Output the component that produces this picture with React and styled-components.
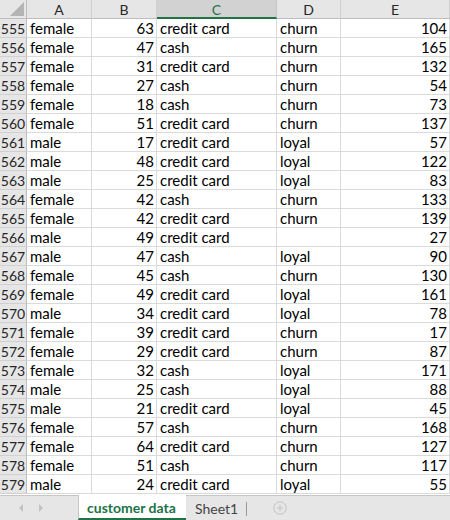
import React from 'react';
import styled, { createGlobalStyle, css } from 'styled-components';

const GlobalStyle = createGlobalStyle`
  html, body {
    margin: 0;
    padding: 0;
    background: #ffffff;
  }
  body {
    font-family: Lato, "Liberation Sans", Arial, sans-serif;
  }
`;

const GREEN = '#217346';
const COLS = '27px 65px 65px 120px 64px 109px';

const Sheet = styled.div`
  width: 450px;
  height: 520px;
  display: flex;
  flex-direction: column;
  overflow: hidden;
  background: #ffffff;
`;

const Grid = styled.div`
  flex: 1;
  display: grid;
  grid-template-columns: ${COLS};
  grid-template-rows: 19px;
  grid-auto-rows: 19px;
  align-content: start;
  overflow: hidden;
`;

const Corner = styled.div`
  position: relative;
  background: #e6e6e6;
  border-right: 1px solid #bdbdbd;
  border-bottom: 1px solid #bdbdbd;
  &::after {
    content: '';
    position: absolute;
    right: 2px;
    bottom: 2px;
    border-left: 14px solid transparent;
    border-bottom: 14px solid #b4b4b4;
  }
`;

const ColHead = styled.div`
  background: ${p => (p.$active ? '#d2d2d2' : '#e6e6e6')};
  color: ${p => (p.$active ? GREEN : '#262626')};
  border-right: 1px solid ${p => (p.$active ? '#c4c4c4' : '#d0d0d0')};
  border-bottom: ${p => (p.$active ? `2px solid ${GREEN}` : '1px solid #bdbdbd')};
  box-sizing: border-box;
  font-size: 14px;
  display: flex;
  align-items: center;
  justify-content: center;
  padding-top: 1px;
`;

const RowHead = styled.div`
  background: #e6e6e6;
  color: #262626;
  border-right: 1px solid #bdbdbd;
  border-bottom: 1px solid #d0d0d0;
  font-size: 14px;
  display: flex;
  align-items: center;
  justify-content: center;
  box-sizing: border-box;
`;

const Cell = styled.div`
  border-right: 1px solid #dadada;
  border-bottom: 1px solid #dadada;
  font-size: 15px;
  color: #000000;
  display: flex;
  align-items: center;
  padding: 0 2px 0 3px;
  box-sizing: border-box;
  white-space: nowrap;
  overflow: hidden;
  ${p =>
    p.$num &&
    css`
      justify-content: flex-end;
    `}
`;

const TabBar = styled.div`
  height: 25px;
  flex-shrink: 0;
  background: #e6e6e6;
  border-top: 1px solid #c6c6c6;
  display: flex;
  align-items: stretch;
  box-sizing: border-box;
`;

const NavArrows = styled.div`
  width: 78px;
  display: flex;
  align-items: center;
  padding-left: 19px;
  gap: 16px;
  box-sizing: border-box;
`;

const Arrow = styled.span`
  width: 0;
  height: 0;
  border-top: 4px solid transparent;
  border-bottom: 4px solid transparent;
  ${p =>
    p.$dir === 'left'
      ? css`border-right: 4px solid #c2c2c2;`
      : css`border-left: 4px solid #c2c2c2;`}
`;

const Tab = styled.div`
  padding: 0 8px;
  display: flex;
  align-items: center;
  font-size: 14px;
  box-sizing: border-box;
  ${p =>
    p.$active
      ? css`
          background: #ffffff;
          color: ${GREEN};
          font-weight: bold;
          border-left: 1px solid #c6c6c6;
          border-bottom: 2px solid ${GREEN};
          margin-top: -1px;
          padding-top: 1px;
          width: 108px;
        `
      : css`
          color: #444444;
          padding-left: 9px;
        `}
`;

const Separator = styled.div`
  width: 1px;
  background: #9a9a9a;
  margin: 6px 0 4px 0;
`;

const AddButton = styled.div`
  display: flex;
  align-items: center;
  padding-left: 26px;
`;

const rows = [
  [555, 'female', 63, 'credit card', 'churn', 104],
  [556, 'female', 47, 'cash', 'churn', 165],
  [557, 'female', 31, 'credit card', 'churn', 132],
  [558, 'female', 27, 'cash', 'churn', 54],
  [559, 'female', 18, 'cash', 'churn', 73],
  [560, 'female', 51, 'credit card', 'churn', 137],
  [561, 'male', 17, 'credit card', 'loyal', 57],
  [562, 'male', 48, 'credit card', 'loyal', 122],
  [563, 'male', 25, 'credit card', 'loyal', 83],
  [564, 'female', 42, 'cash', 'churn', 133],
  [565, 'female', 42, 'credit card', 'churn', 139],
  [566, 'male', 49, 'credit card', '', 27],
  [567, 'male', 47, 'cash', 'loyal', 90],
  [568, 'female', 45, 'cash', 'churn', 130],
  [569, 'female', 49, 'credit card', 'loyal', 161],
  [570, 'male', 34, 'credit card', 'loyal', 78],
  [571, 'female', 39, 'credit card', 'churn', 17],
  [572, 'female', 29, 'credit card', 'churn', 87],
  [573, 'female', 32, 'cash', 'loyal', 171],
  [574, 'male', 25, 'cash', 'loyal', 88],
  [575, 'male', 21, 'credit card', 'loyal', 45],
  [576, 'female', 57, 'cash', 'churn', 168],
  [577, 'female', 64, 'credit card', 'churn', 127],
  [578, 'female', 51, 'cash', 'churn', 117],
  [579, 'male', 24, 'credit card', 'loyal', 55],
];

export default function App() {
  return (
    <>
      <GlobalStyle />
      <Sheet>
        <Grid>
          <Corner />
          {['A', 'B', 'C', 'D', 'E'].map(l => (
            <ColHead key={l} $active={l === 'C'}>
              {l}
            </ColHead>
          ))}
          {rows.map(([n, gender, age, pay, status, value]) => (
            <React.Fragment key={n}>
              <RowHead>{n}</RowHead>
              <Cell>{gender}</Cell>
              <Cell $num>{age}</Cell>
              <Cell>{pay}</Cell>
              <Cell>{status}</Cell>
              <Cell $num>{value}</Cell>
            </React.Fragment>
          ))}
        </Grid>
        <TabBar>
          <NavArrows>
            <Arrow $dir="left" />
            <Arrow $dir="right" />
          </NavArrows>
          <Tab $active>customer data</Tab>
          <Tab>Sheet1</Tab>
          <Separator />
          <AddButton>
            <svg width="14" height="14" viewBox="0 0 14 14">
              <circle cx="7" cy="7" r="6.2" fill="none" stroke="#c2c2c2" strokeWidth="1" />
              <path d="M7 3.8v6.4M3.8 7h6.4" stroke="#c2c2c2" strokeWidth="1" />
            </svg>
          </AddButton>
        </TabBar>
      </Sheet>
    </>
  );
}
